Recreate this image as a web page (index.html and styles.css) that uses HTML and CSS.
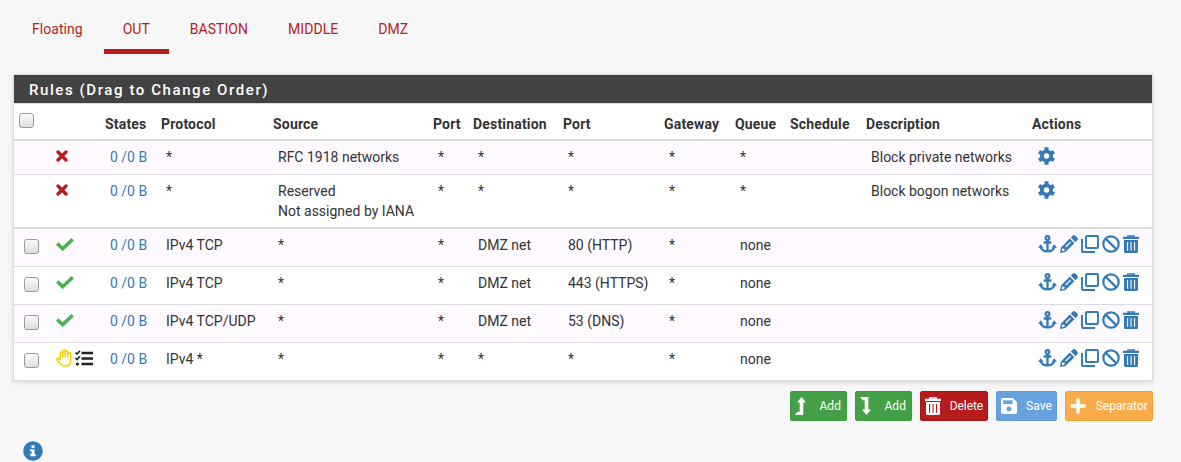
FILE: index.html
```html
<!DOCTYPE html>
<html lang="en">
<head>
<meta charset="utf-8">
<title>Firewall Rules</title>
<link rel="stylesheet" href="styles.css">
</head>
<body>
<svg class="sprite" aria-hidden="true">
  <symbol id="x" viewBox="0 0 12 12"><path d="M2 2 10 10M10 2 2 10" fill="none" stroke="currentColor" stroke-width="3.3" stroke-linecap="round"/></symbol>
  <symbol id="check" viewBox="0 0 18 13"><path d="M1.300 5.500 6.600 10.700 16.700 1.300" fill="none" stroke="currentColor" stroke-width="3.6"/></symbol>
  <symbol id="gear" viewBox="0 0 17 18"><circle cx="8.500" cy="9" r="4.600" fill="none" stroke="currentColor" stroke-width="3.800"/><path d="M8.500 .3v4M8.500 13.700v4M1 4.700l3 1.700M13 11.600l3 1.700M1 13.300l3-1.700M13 6.400l3-1.700" stroke="currentColor" stroke-width="4"/></symbol>
  <symbol id="anchor" viewBox="0 0 19 18"><circle cx="9.500" cy="3" r="1.900" fill="none" stroke="currentColor" stroke-width="2.100"/><path d="M9.500 5v11M5.700 7.500h7.600M2.500 11.500c.7 3.200 3.600 4.900 7 4.900s6.300-1.700 7-4.900" fill="none" stroke="currentColor" stroke-width="2.300"/><path d="M0 12.700 2.700 9.300 5.400 12.700ZM13.600 12.700 16.300 9.300 19 12.700Z" fill="currentColor"/></symbol>
  <symbol id="pencil" viewBox="0 0 18 18"><path d="M12.700.7a2 2 0 0 1 2.700 0l1.900 1.900a2 2 0 0 1 0 2.700L15.400 7.200 10.800 2.600ZM9.800 3.600 14.400 8.200 5.400 17 0 18 1 12.600ZM2.200 13.500 1.700 16.300 4.500 15.800 4.500 13.800ZM5.200 11.600 6.200 12.400 11 7.500 10.100 6.700Z" fill="currentColor" fill-rule="evenodd"/></symbol>
  <symbol id="clone" viewBox="0 0 18 18"><path d="M6 1h10a1 1 0 0 1 1 1v10a1 1 0 0 1-1 1H6a1 1 0 0 1-1-1V2a1 1 0 0 1 1-1ZM1 4V16a1 1 0 0 0 1 1h12" fill="none" stroke="currentColor" stroke-width="1.900"/></symbol>
  <symbol id="ban" viewBox="0 0 18 18"><circle cx="9" cy="9" r="7.700" fill="none" stroke="currentColor" stroke-width="2.200"/><path d="m3.600 3.600 10.800 10.800" stroke="currentColor" stroke-width="2.200"/></symbol>
  <symbol id="trash" viewBox="0 0 16 18"><path d="M5 2V1h6v1" fill="none" stroke="currentColor" stroke-width="1.700"/><path d="M0 1.700h16V4H0ZM1 5h14v11.500a1.500 1.500 0 0 1-1.500 1.500h-11A1.500 1.500 0 0 1 1 16.500ZM4 7v8.700h1.100V7ZM7.500 7v8.700h1.100V7ZM11 7v8.700h1.100V7Z" fill="currentColor" fill-rule="evenodd"/></symbol>
  <symbol id="hand" viewBox="0 0 16 18"><path d="M4.300 11V4.200a1.200 1.200 0 0 1 2.400 0V2.300a1.250 1.250 0 0 1 2.500 0v1a1.250 1.250 0 0 1 2.500 0v2a1.250 1.250 0 0 1 2.900 0v6.200c0 3.200-1.500 5.500-4.700 5.500H8.500c-2 0-3-.9-4-2.100L1.200 11.200c-.9-1.500.8-2.600 1.900-1.500L4.300 11M6.700 3v5.600M9.200 2.500v6.100M11.700 3.500v5.100" fill="none" stroke="currentColor" stroke-width="1.600" stroke-linejoin="round"/></symbol>
  <symbol id="list" viewBox="0 0 18 16"><path d="M6.500 3H18M6.500 8.500H18M6.500 14H18" stroke="currentColor" stroke-width="2.300"/><path d="m.4 2.600 1.600 1.500L5 .7M.4 8.100 2 9.600l3-3.400" fill="none" stroke="currentColor" stroke-width="1.600"/><circle cx="2.400" cy="14" r="1.600" fill="currentColor"/></symbol>
  <symbol id="up" viewBox="0 0 11 18"><path d="M6.500 0 11 5.500H8.300V18H0l2.500-3.200h2.200V5.500H2Z" fill="currentColor"/></symbol>
  <symbol id="down" viewBox="0 0 11 18"><path d="M6.500 18 11 12.500H8.300V0H0l2.500 3.200h2.200v9.300H2Z" fill="currentColor"/></symbol>
  <symbol id="save" viewBox="0 0 16 16"><path d="M2 0h9.800L16 4.200V14a2 2 0 0 1-2 2H2a2 2 0 0 1-2-2V2a2 2 0 0 1 2-2ZM2.200 2.200V6h9.400V2.200ZM8 8.500a2.500 2.500 0 1 0 .01 0Z" fill="currentColor" fill-rule="evenodd"/></symbol>
  <symbol id="plus" viewBox="0 0 16 16"><path d="M8 .5v15M.5 8h15" stroke="currentColor" stroke-width="3.400"/></symbol>
  <symbol id="info" viewBox="0 0 20 20"><circle cx="10" cy="10" r="9.800" fill="currentColor"/><path d="M8.500 4.200h3V7h-3ZM7.200 8.200h4.300v4.900h1.200v2.100H7.200v-2.100h1.300v-2.800H7.200Z" fill="#fff"/></symbol>
</svg>

<nav class="tabs">
  <a>Floating</a><a class="active">OUT</a><a>BASTION</a><a>MIDDLE</a><a>DMZ</a>
</nav>

<section class="panel">
  <h2>Rules (Drag to Change Order)</h2>
  <table>
    <colgroup><col class="c-check"><col class="c-icon"><col class="c-states"><col class="c-proto"><col class="c-source"><col class="c-port"><col class="c-dest"><col class="c-dport"><col class="c-gateway"><col class="c-queue"><col class="c-schedule"><col class="c-desc"><col class="c-actions"></colgroup>
    <thead>
      <tr><th><input type="checkbox"></th><th></th><th>States</th><th>Protocol</th><th>Source</th><th>Port</th><th>Destination</th><th>Port</th><th>Gateway</th><th>Queue</th><th>Schedule</th><th>Description</th><th>Actions</th></tr>
    </thead>
    <tbody class="system">
      <tr class="odd"><td></td><td><svg class="i-x"><use href="#x"/></svg></td><td><a>0 /0 B</a></td><td>*</td><td>RFC 1918 networks</td><td>*</td><td>*</td><td>*</td><td>*</td><td>*</td><td></td><td>Block private networks</td><td><svg class="i-gear"><use href="#gear"/></svg></td></tr>
      <tr class="tall"><td></td><td><svg class="i-x"><use href="#x"/></svg></td><td><a>0 /0 B</a></td><td>*</td><td>Reserved<br>Not assigned by IANA</td><td>*</td><td>*</td><td>*</td><td>*</td><td>*</td><td></td><td>Block bogon networks</td><td><svg class="i-gear"><use href="#gear"/></svg></td></tr>
    </tbody>
    <tbody class="user">
      <tr class="odd"><td><input type="checkbox"></td><td><svg class="i-check"><use href="#check"/></svg></td><td><a>0 /0 B</a></td><td>IPv4 TCP</td><td>*</td><td>*</td><td>DMZ net</td><td>80 (HTTP)</td><td>*</td><td>none</td><td></td><td></td><td><div class="actions"><svg class="wide"><use href="#anchor"/></svg><svg><use href="#pencil"/></svg><svg><use href="#clone"/></svg><svg><use href="#ban"/></svg><svg class="slim"><use href="#trash"/></svg></div></td></tr>
      <tr><td><input type="checkbox"></td><td><svg class="i-check"><use href="#check"/></svg></td><td><a>0 /0 B</a></td><td>IPv4 TCP</td><td>*</td><td>*</td><td>DMZ net</td><td>443 (HTTPS)</td><td>*</td><td>none</td><td></td><td></td><td><div class="actions"><svg class="wide"><use href="#anchor"/></svg><svg><use href="#pencil"/></svg><svg><use href="#clone"/></svg><svg><use href="#ban"/></svg><svg class="slim"><use href="#trash"/></svg></div></td></tr>
      <tr class="odd"><td><input type="checkbox"></td><td><svg class="i-check"><use href="#check"/></svg></td><td><a>0 /0 B</a></td><td>IPv4 TCP/UDP</td><td>*</td><td>*</td><td>DMZ net</td><td>53 (DNS)</td><td>*</td><td>none</td><td></td><td></td><td><div class="actions"><svg class="wide"><use href="#anchor"/></svg><svg><use href="#pencil"/></svg><svg><use href="#clone"/></svg><svg><use href="#ban"/></svg><svg class="slim"><use href="#trash"/></svg></div></td></tr>
      <tr><td><input type="checkbox"></td><td><div class="status"><svg class="i-hand"><use href="#hand"/></svg><svg class="i-list"><use href="#list"/></svg></div></td><td><a>0 /0 B</a></td><td>IPv4 *</td><td>*</td><td>*</td><td>*</td><td>*</td><td>*</td><td>none</td><td></td><td></td><td><div class="actions"><svg class="wide"><use href="#anchor"/></svg><svg><use href="#pencil"/></svg><svg><use href="#clone"/></svg><svg><use href="#ban"/></svg><svg class="slim"><use href="#trash"/></svg></div></td></tr>
    </tbody>
  </table>
</section>

<div class="buttons">
  <button class="add"><svg class="arrow"><use href="#up"/></svg>Add</button>
  <button class="add"><svg class="arrow"><use href="#down"/></svg>Add</button>
  <button class="delete"><svg class="bin"><use href="#trash"/></svg>Delete</button>
  <button class="save"><svg><use href="#save"/></svg>Save</button>
  <button class="separator"><svg><use href="#plus"/></svg>Separator</button>
</div>
<svg class="info"><use href="#info"/></svg>
</body>
</html>
```

FILE: styles.css
```css
* { box-sizing: border-box; }
body { margin: 0; height: 462px; overflow: hidden; background: #f7f7f7; color: #333; font: 14px/20px Roboto, sans-serif; }
.sprite { display: none; }
svg { display: block; flex: none; }

.tabs { display: flex; height: 54px; padding-left: 13px; gap: 2px; color: #b71c1c; }
.tabs a { height: 54px; padding: 19px 19px 0; border-bottom: 5px solid transparent; letter-spacing: .04px; }
.tabs a.active { border-color: #b71c1c; }

.panel { width: 1140px; margin: 20px 0 0 13px; border: 1px solid #dcdcdc; background: #fff; box-shadow: 0 2px 5px rgba(0, 0, 0, .1); }
.panel h2 { height: 28px; margin: 0; padding: 0 15px; background: #424242; color: #fff; font-size: 15px; font-weight: 500; line-height: 30px; letter-spacing: 1.58px; }

table { width: 1138px; table-layout: fixed; border-collapse: separate; border-spacing: 0; border-top: 1px solid #ddd; }
.c-check { width: 32px; }
.c-icon { width: 54px; }
.c-states { width: 56px; }
.c-proto { width: 112px; }
.c-source { width: 160px; }
.c-port { width: 40px; }
.c-dest { width: 90px; }
.c-dport { width: 101px; }
.c-gateway { width: 71px; }
.c-queue { width: 55px; }
.c-schedule { width: 76px; }
.c-desc { width: 166px; }
.c-actions { width: 125px; }
th, td { vertical-align: top; text-align: left; white-space: nowrap; }
th { height: 37px; padding: 10px 0 0 5px; border-bottom: 2px solid #ddd; font-weight: 700; letter-spacing: .18px; }
th:first-child { padding-top: 9px; }
td { height: 38px; padding: 6px 0 0 10px; border-bottom: 1px solid #ddd; }
.system td { height: 34px; }
.system .tall td { height: 54px; border-bottom-width: 2px; }
.user tr:last-child td { height: 37px; border-bottom: 0; }
.odd { background: #fefaff; }
td a { color: #337ab7; }

input { display: block; appearance: none; width: 15px; height: 15px; margin: 0; border: 1px solid #999; border-radius: 3px; background: linear-gradient(#fafafa, #dedede); }
td input { margin-top: 4px; }

.i-x { width: 12px; height: 12px; margin-top: 3px; color: #b71c1c; }
.i-check { width: 18px; height: 13px; margin-top: 3px; color: #4caf50; }
.i-gear { width: 17px; height: 18px; margin-left: .5px; color: #337ab7; }
.status { display: flex; gap: 3px; }
.i-hand { width: 16px; height: 18px; color: #ffcc00; }
.i-list { width: 18px; height: 16px; margin-top: 1px; color: #212121; }
.actions { display: flex; gap: 3px; padding-left: .7px; color: #337ab7; }
.actions svg { width: 18px; height: 18px; }
.actions .wide { width: 19px; }
.actions .slim { width: 16px; }

.buttons { display: flex; justify-content: flex-end; gap: 8px; margin: 10px 28px 0 0; }
button { display: flex; align-items: center; justify-content: space-between; height: 30px; padding: 0 4px; border: 1px solid; border-radius: 2px; color: #fff; font: 12px/18px Roboto, sans-serif; letter-spacing: .06px; }
button svg { width: 16px; height: 16px; }
button .arrow { width: 11px; height: 18px; }
button .bin { height: 18px; }
.add { width: 57px; padding-right: 5px; background: #43a047; border-color: #3d9a40; }
.delete { width: 68px; letter-spacing: -.1px; background: #b71c1c; border-color: #a51919; }
.save { width: 61px; background: #68a2de; border-color: #5c9ada; }
.separator { width: 88px; background: #f8ac4a; border-color: #f2a138; }
.info { width: 20px; height: 20px; margin: 20px 0 0 23px; color: #337ab7; }
```
